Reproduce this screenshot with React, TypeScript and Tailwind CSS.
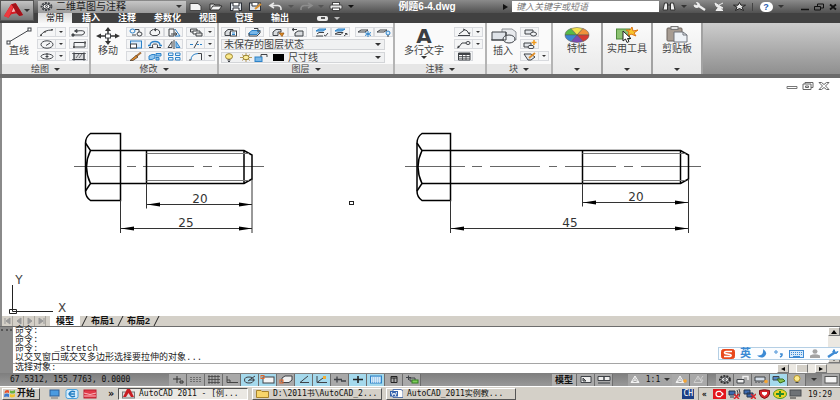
import type { ReactNode } from "react";
import clsx from "clsx";

// ─── Shared bits ──────────────────────────────────────────────────────────────
const INK = "#3f4247";
const BLUE = "#2d82c8";

function Glyph({ w = 16, h = 9, children }: { w?: number; h?: number; children: ReactNode }) {
  return (
    <svg
      width={w}
      height={h}
      viewBox={`0 0 ${w} ${h}`}
      fill="none"
      stroke={INK}
      strokeWidth="1"
      className="block shrink-0"
      aria-hidden="true"
    >
      {children}
    </svg>
  );
}

function Caret({ className = "text-[#333]" }: { className?: string }) {
  return (
    <svg width="6" height="3" viewBox="0 0 6 3" className={clsx("block shrink-0", className)} aria-hidden="true">
      <path d="M0 0H6L3 3Z" fill="currentColor" />
    </svg>
  );
}

// ─── Title bar ────────────────────────────────────────────────────────────────
const quickAccess: { name: string; icon: ReactNode; caret?: boolean }[] = [
  {
    name: "新建",
    icon: <path d="M2 1.500H10L13 4V8.500H2Z" fill="#f4f4f4" stroke="#444" />,
  },
  {
    name: "打开",
    icon: (
      <>
        <path d="M2 8V2H6L7 3H12V4" fill="#ddd" stroke="#333" />
        <path d="M2 8L5 4H14L11 8Z" fill="#f4f4f4" stroke="#333" />
      </>
    ),
  },
  {
    name: "保存",
    icon: (
      <>
        <rect x="2.500" y="1" width="11" height="7.500" fill="#dfe4ea" stroke="#2b2f36" />
        <path d="M5 1V4H11V1M5 8.500V6H11V8.500" fill="#fff" stroke="#2b2f36" />
      </>
    ),
  },
  {
    name: "另存为",
    icon: (
      <>
        <rect x="1.500" y="1" width="11" height="7.500" fill="#dfe4ea" stroke="#2b2f36" />
        <path d="M4 1V4H10V1" fill="#fff" stroke="#2b2f36" />
        <path d="M7 7L13 2" stroke="#d9902f" strokeWidth="2" />
      </>
    ),
  },
  {
    name: "放弃",
    icon: <path d="M6 1L2 3.500L6 6M2 3.500H10Q13.500 4 13 8" stroke="#e8e8e8" strokeWidth="1.500" />,
    caret: true,
  },
  {
    name: "重做",
    icon: <path d="M10 1L14 3.500L10 6M14 3.500H6Q2.500 4 3 8" stroke="#8d8d8d" strokeWidth="1.500" />,
    caret: true,
  },
  {
    name: "打印",
    icon: (
      <>
        <rect x="4.500" y="0.500" width="7" height="3" fill="#fff" stroke="#444" />
        <rect x="2" y="3" width="12" height="4" rx="1" fill="#e6e6e6" stroke="#444" />
        <rect x="4.500" y="6" width="7" height="2.500" fill="#fff" stroke="#444" />
      </>
    ),
    caret: true,
  },
];

function IconButton({ label, className, children }: { label: string; className?: string; children: ReactNode }) {
  return (
    <button aria-label={label} className={clsx("flex items-center justify-center", className)}>
      {children}
    </button>
  );
}

function TitleBar() {
  return (
    <div className="flex h-[13px] items-center bg-linear-to-b from-[#8b8b8b] to-[#515151]">
      <div className="ml-1 flex h-[12px] w-[148px] items-center bg-linear-to-b from-[#c6c6c6] to-[#9c9c9c]">
        <span className="px-[2px]">
          <Glyph w={13} h={9}>
            <ellipse cx="6.500" cy="4.500" rx="5" ry="3.500" strokeWidth="1.800" strokeDasharray="2 1" />
            <ellipse cx="6.500" cy="4.500" rx="3.500" ry="2.500" fill="#eee" />
            <circle cx="6.500" cy="4.500" r="1" />
          </Glyph>
        </span>
        <select
          aria-label="工作空间"
          className="h-[12px] min-w-0 flex-1 appearance-none bg-transparent pl-px text-[10px] leading-[12px] text-[#222] outline-none"
        >
          <option>二维草图与注释</option>
        </select>
        <span className="pr-1">
          <Caret />
        </span>
      </div>
      <div className="flex">
        {quickAccess.map((q) => (
          <div key={q.name} className="flex">
            <IconButton label={q.name} className="w-5">
              <Glyph>{q.icon}</Glyph>
            </IconButton>
            {q.caret && (
              <span className="flex w-[10px] items-center justify-center">
                <Caret className={q.name === "打印" ? "text-[#111]" : "text-[#555]"} />
              </span>
            )}
          </div>
        ))}
      </div>
      <h1 className="flex-1 text-center text-[10px] leading-[12px] font-bold whitespace-nowrap text-white">
        例题6-4.dwg
      </h1>
      <span className="flex w-[14px] justify-center">
        <Glyph w={5} h={6}>
          <path d="M0 0L5 3L0 6Z" fill="#111" stroke="none" />
        </Glyph>
      </span>
      <input
        aria-label="搜索"
        placeholder="键入关键字或短语"
        className="h-[11px] w-[147px] bg-white pl-1 text-[9px] leading-[10px] italic outline-none placeholder:text-[#777]"
      />
      <IconButton label="查找" className="w-5">
        <Glyph w={14} h={9}>
          <path d="M2.500 1H5.500V8H1L2.500 1ZM8.500 1H11.500L13 8H8.500ZM5.500 3H8.500" fill="#eee" stroke="#333" />
        </Glyph>
      </IconButton>
      <span className="flex w-[10px] justify-center">
        <Caret />
      </span>
      <IconButton label="速博应用中心" className="w-5">
        <Glyph w={13} h={9}>
          <path d="M6 4L12 8" stroke="#eee" strokeWidth="2.200" />
          <path d="M1 3Q1 5.500 4 5.500Q7 5 6.500 2.500Q6 0.500 3.500 0.500L5 2.500L3.500 3.500Z" fill="#eee" stroke="#eee" />
        </Glyph>
      </IconButton>
      <IconButton label="通讯中心" className="w-5">
        <Glyph w={13} h={9}>
          <path d="M2 1Q3 7 10 6L2 1ZM6 3L10 1M5 6L3 8.500H10L7 6" fill="#eee" stroke="#eee" />
        </Glyph>
      </IconButton>
      <IconButton label="收藏夹" className="w-5">
        <Glyph w={13} h={9}>
          <path
            d="M6.500 0.500L8 3.200H12.500L9 5.200L10.500 8.500L6.500 6.500L2.500 8.500L4 5.200L0.500 3.200H5Z"
            fill="#e8e8e8"
            stroke="#222"
          />
        </Glyph>
      </IconButton>
      <span className="mx-[3px] h-2 w-px bg-[#444]" />
      <IconButton label="帮助" className="w-5">
        <span className="flex h-[10px] w-[13px] items-center justify-center rounded-full bg-white text-[9px] leading-[10px] font-bold text-[#1f5cb0]">
          ?
        </span>
      </IconButton>
      <span className="mr-3 flex w-[10px] justify-center">
        <Caret />
      </span>
      <IconButton label="最小化" className="w-[14px]">
        <Glyph w={10} h={8}>
          <path d="M1 6.500H9" stroke="#111" strokeWidth="1.500" />
        </Glyph>
      </IconButton>
      <IconButton label="还原" className="w-[14px]">
        <Glyph w={10} h={8}>
          <path d="M3.500 3V1H9.500V5H7M0.500 3.500H6.500V7H0.500Z" stroke="#111" />
        </Glyph>
      </IconButton>
      <IconButton label="关闭" className="w-[14px]">
        <Glyph w={8} h={8}>
          <path d="M1 1.500L7 6.500M7 1.500L1 6.500" stroke="#111" strokeWidth="1.800" />
        </Glyph>
      </IconButton>
    </div>
  );
}

const ribbonTabs = ["插入", "注释", "参数化", "视图", "管理", "输出"];

function Header() {
  return (
    <header className="flex h-[23px] bg-[#414141]">
      <button
        aria-label="应用程序菜单"
        className="flex h-[21px] w-[34px] items-center justify-between border border-[#555] bg-linear-to-b from-[#c4c4c4] to-[#757575] px-[3px]"
      >
        <svg width="19" height="16" viewBox="0 0 21 17" aria-hidden="true">
          <path d="M8 1L13 0L21 13L17 14L14 11L8 12L5 16L0 14Z" fill="#d41c24" />
          <path d="M8 1L13 0L21 13L17 14L14 11Z" fill="#a3121a" />
          <path d="M8 1L10 4L5 16L0 14Z" fill="#ee3a3f" />
          <path d="M10.500 5L12.500 9L8.500 9.500Z" fill="#f6c3c3" />
        </svg>
        <Caret />
      </button>
      <div className="min-w-0 flex-1">
        <TitleBar />
        <nav className="flex h-[10px] items-center text-[9px] leading-[10px] font-bold text-white">
          <button className="ml-1 h-[10px] w-[34px] bg-linear-to-b from-[#d9d9d9] to-[#f7f7f7] font-normal text-[#222]">
            常用
          </button>
          <div className="ml-[10px] flex gap-[18px]">
            {ribbonTabs.map((t) => (
              <button key={t}>{t}</button>
            ))}
          </div>
          <button aria-label="最小化功能区" className="ml-[28px] flex items-center gap-[6px]">
            <span className="flex h-[5px] w-[11px] items-center justify-center rounded-xs bg-[#e9e9e9]">
              <span className="h-[2px] w-1 bg-[#555]" />
            </span>
            <Caret className="text-[#bbb]" />
          </button>
        </nav>
      </div>
    </header>
  );
}

// ─── Ribbon ───────────────────────────────────────────────────────────────────
function Panel({ title, className, children }: { title: string; className: string; children: ReactNode }) {
  return (
    <section aria-label={title} className={clsx("flex shrink-0 flex-col border-r-2 border-[#b4b4b4] bg-[#fafafa]", className)}>
      <div className="flex flex-1 items-start gap-[3px] px-[2px] pt-1">{children}</div>
      <button className="flex h-[10px] items-center justify-center gap-[5px] bg-[#e6e6e6] text-[9px] leading-[10px] text-[#444]">
        {title}
        <Caret />
      </button>
    </section>
  );
}

function BigTool({ label, caret, className, children }: { label: string; caret?: boolean; className: string; children: ReactNode }) {
  return (
    <button className={clsx("flex shrink-0 flex-col items-center text-[10px] leading-[11px] whitespace-nowrap text-[#444]", className)}>
      <span className="flex h-[18px] items-center">{children}</span>
      {label}
      {caret && <Caret />}
    </button>
  );
}

function Tool({ name, caret, children }: { name: string; caret?: boolean; children: ReactNode }) {
  return (
    <div className="flex h-[10px]">
      <button aria-label={name} className="flex w-[19px] items-center justify-center border border-[#d8dade] bg-[#f4f5f6]">
        <Glyph>{children}</Glyph>
      </button>
      {caret && (
        <button aria-label={`${name}选项`} className="flex w-[10px] items-center justify-center border border-l-0 border-[#d8dade] bg-[#f4f5f6]">
          <svg width="4" height="2" viewBox="0 0 4 2" aria-hidden="true">
            <path d="M0 0H4L2 2Z" fill="#333" />
          </svg>
        </button>
      )}
    </div>
  );
}

function DrawPanel() {
  return (
    <Panel title="绘图" className="w-[89px]">
      <BigTool label="直线" className="w-[30px]">
        <Glyph w={26} h={18}>
          <path d="M3 15L23 3" />
          <rect x="1" y="14" width="3" height="3" fill="#fff" />
          <rect x="22" y="1" width="3" height="3" fill="#fff" />
        </Glyph>
      </BigTool>
      <div className="flex flex-col gap-[2px]">
        <Tool name="圆弧" caret>
          <path d="M2 7Q5 2 13 2" />
          <path d="M1 6.500H3V8H1ZM5 3H7V4.500H5ZM12 1H14V2.500H12Z" fill="#555" stroke="none" />
        </Tool>
        <Tool name="圆" caret>
          <ellipse cx="8" cy="4.500" rx="6" ry="3.700" />
          <path d="M7 5.500L11 3" />
        </Tool>
        <Tool name="椭圆" caret>
          <ellipse cx="8" cy="4.500" rx="6" ry="2.500" />
          <path d="M6.500 4.500H9.500M8 1V6" />
        </Tool>
      </div>
      <div className="flex flex-col gap-[2px]">
        <Tool name="多段线">
          <path d="M2 7H11Q14 6 13.500 4Q13 2 6 3" />
          <path d="M6 1.500V4.500L3.500 3ZM1 6H3V8H1Z" fill="#555" />
        </Tool>
        <Tool name="矩形">
          <path d="M3 2.500H14V7H3Z" />
          <path d="M2 6H4V8H2ZM13 1.500H15V3.500H13Z" fill="#555" stroke="none" />
        </Tool>
        <Tool name="图案填充">
          <rect x="3" y="1.500" width="10" height="6" fill="#d9dadc" />
          <path d="M1 1.500H15M1 7.500H15M3 0V9M13 0V9M5 6L8 2M8 6L11 2" strokeWidth="0.700" />
        </Tool>
      </div>
    </Panel>
  );
}

function ModifyPanel() {
  return (
    <Panel title="修改" className="w-[128px]">
      <BigTool label="移动" className="w-[30px]">
        <Glyph w={24} h={18}>
          <path d="M12 3V15M3 9H21" stroke="#333" strokeWidth="1.500" />
          <path d="M12 0L15 4H9ZM12 18L15 14H9ZM0 9L5 6.500V11.500ZM24 9L19 6.500V11.500Z" fill="#333" stroke="none" />
          <rect x="9.500" y="7" width="5" height="4" fill="#fff" />
        </Glyph>
      </BigTool>
      <div className="grid grid-cols-3 gap-y-[2px]">
        <Tool name="复制">
          <ellipse cx="4.500" cy="3" rx="2.500" ry="2" stroke={BLUE} />
          <ellipse cx="11.500" cy="6" rx="2.500" ry="2" />
          <path d="M4 7H8M7 1.500H11V4" />
        </Tool>
        <Tool name="旋转">
          <path d="M6 1.500Q2 3 3 6Q5 8.500 10 7.500Q14 6 12.500 3Q11 1 8 1.500" />
          <path d="M9 0L6 1.500L9 3.500Z" fill={INK} stroke="none" />
        </Tool>
        <Tool name="拉伸">
          <path d="M3 1H8V8H3Z" />
          <path d="M9 1L14 8H9" stroke={BLUE} />
          <path d="M5 6H11M9 4.500L11 6L9 7.500" />
        </Tool>
        <Tool name="缩放">
          <rect x="2.500" y="1" width="11" height="7" fill="#d8ebfa" stroke={BLUE} />
          <rect x="2.500" y="4" width="6" height="4" fill="#fff" />
        </Tool>
        <Tool name="偏移">
          <path d="M2 7.500H6Q4 4 8 4Q12 4 10 7.500H14" />
          <path d="M1 5.500H3Q3 1.500 8 1.500Q13 1.500 13 5.500H15" stroke={BLUE} strokeWidth="1.300" />
        </Tool>
        <Tool name="镜像">
          <path d="M8 0V9" />
          <path d="M6 1.500V7.500H2Z" />
          <path d="M10 1.500V7.500H14Z" fill="#9cc9ef" stroke={BLUE} />
        </Tool>
        <Tool name="删除">
          <path d="M13 0.500L8 4.500" stroke="#a8703a" strokeWidth="2" />
          <path d="M8 3.500L10 5L5 8.500H2Z" fill="#e48b2a" stroke="#463322" strokeWidth="0.700" />
        </Tool>
        <Tool name="分解">
          <path d="M2 4L5 2.500H8V6L5 7.500H2Z" fill="#8fc6f0" stroke={BLUE} />
          <path d="M9 1.500H14V4H9ZM9 5.500H12V8H9Z" fill="#8fc6f0" stroke={BLUE} />
        </Tool>
        <Tool name="阵列">
          <path d="M2.500 1H7V3.500H2.500ZM9.500 1H14V3.500H9.500ZM2.500 5.500H7V8H2.500ZM9.500 5.500H14V8H9.500Z" fill="#e3f1fc" stroke={BLUE} />
        </Tool>
      </div>
      <div className="flex flex-col gap-[2px]">
        <Tool name="复制嵌套对象" caret>
          <path d="M2.500 1H9V4H2.500Z" fill="#ddd" />
          <path d="M5 3H12V6H5Z" fill="#fff" />
          <path d="M8 5H14V8H8Z" fill="#ddd" />
        </Tool>
        <Tool name="修剪" caret>
          <path d="M2 4.500H5" stroke={BLUE} />
          <path d="M6 8L10 1" />
          <path d="M9 4.500H15" stroke={BLUE} strokeDasharray="2 1" />
        </Tool>
        <Tool name="圆角" caret>
          <path d="M3 8Q3 2 10 1.500" stroke={BLUE} />
          <path d="M10 1.500H13.500V8M1 8H3" />
        </Tool>
      </div>
    </Panel>
  );
}

const sheet = <path d="M2 4L5 1.500H10V4H7V7.500H2Z" fill="#d9dcdf" />;

const layerTools: { name: string; icon: ReactNode; gap?: boolean }[] = [
  {
    name: "图层特性",
    icon: (
      <>
        {sheet}
        <rect x="7.500" y="3" width="6" height="5" fill="#fff" />
        <path d="M9 5H12M9 6.500H12" stroke={BLUE} />
      </>
    ),
    gap: true,
  },
  {
    name: "将对象的图层设为当前图层",
    icon: (
      <>
        <path d="M2 5L5 2.500H13L10 6.500H2Z" fill="#7ab8e8" stroke={BLUE} />
        <path d="M2 5V8H10L13 5V2.500M7 0.500H11V4" />
      </>
    ),
    gap: true,
  },
  {
    name: "匹配",
    icon: (
      <>
        {sheet}
        <path d="M8 5H13L11 8.500Z" fill="#e08a22" stroke="#8d4e0c" strokeWidth="0.700" />
      </>
    ),
  },
  {
    name: "上一个",
    icon: (
      <>
        <path d="M5 5L8 3H13V8H5Z" fill="#d9dcdf" />
        <path d="M7 1.500H2M4 0L2 1.500L4 3" />
      </>
    ),
    gap: true,
  },
  {
    name: "隔离",
    icon: (
      <>
        <path d="M2 3L5 1H12L9 3Z" fill="#7ab8e8" stroke={BLUE} />
        <path d="M3 6L5 4.500H10M2 8H9M10 7L11.500 8L14 5" />
      </>
    ),
  },
  {
    name: "取消隔离",
    icon: (
      <>
        <path d="M2 3L5 1H12L9 3Z" fill="#7ab8e8" stroke={BLUE} />
        <path d="M2 6L5 4.500H10L8 6.500ZM11 8L14 5.500M12 5.500H14V7" />
      </>
    ),
    gap: true,
  },
  {
    name: "冻结",
    icon: (
      <>
        <path d="M1 4L4 2H11L8 4Z" fill="#eee" />
        <path d="M11 3V9M8 4.500L14 7.500M14 4.500L8 7.500" stroke={BLUE} />
      </>
    ),
  },
  {
    name: "关闭图层",
    icon: (
      <>
        <path d="M1 4L4 2H11L8 4Z" fill="#eee" />
        <ellipse cx="12" cy="5" rx="2" ry="2" fill="#d6e9f8" stroke={BLUE} />
        <path d="M12 7V9" />
      </>
    ),
  },
];

const layerSelect =
  "h-[11px] min-w-0 flex-1 appearance-none bg-transparent pl-[3px] text-[10px] leading-[11px] text-[#444] outline-none";

function LayerPanel() {
  return (
    <Panel title="图层" className="w-[176px]">
      <div className="flex w-full flex-col gap-[2px]">
        <div className="flex">
          {layerTools.map((t) => (
            <div key={t.name} className={t.gap ? "mr-[5px]" : ""}>
              <Tool name={t.name}>{t.icon}</Tool>
            </div>
          ))}
        </div>
        <div className="flex h-[11px] w-[164px] items-center bg-[#f0f1f2] pr-1 ring-1 ring-[#d3d5d8] ring-inset">
          <select aria-label="图层状态" className={layerSelect}>
            <option>未保存的图层状态</option>
          </select>
          <Caret />
        </div>
        <div className="flex h-[11px] w-[164px] items-center bg-[#f0f1f2] pr-1 ring-1 ring-[#d3d5d8] ring-inset">
          <Glyph w={64} h={9}>
            <ellipse cx="8" cy="3.500" rx="3.500" ry="2.800" fill="#fbe98b" stroke="#9a8433" />
            <path d="M6.500 7H9.500M7 8.500H9" />
            <path d="M25 0V9M19 4.500H31M21 1.500L29 7.500M29 1.500L21 7.500" stroke="#a8873a" strokeWidth="0.800" />
            <ellipse cx="25" cy="4.500" rx="3" ry="2.200" fill="#fdf0a0" stroke="#9a8433" />
            <rect x="34" y="4" width="7" height="4.500" fill="#7ab8e8" stroke={BLUE} />
            <path d="M40 4V1.500H46V4" />
            <rect x="52" y="1" width="11" height="7" fill="#000" stroke="none" />
          </Glyph>
          <select aria-label="图层" className={layerSelect}>
            <option>尺寸线</option>
          </select>
          <Caret />
        </div>
      </div>
    </Panel>
  );
}

function AnnotatePanel() {
  return (
    <Panel title="注释" className="w-[92px]">
      <BigTool label="多行文字" caret className="w-[54px]">
        <span className="font-['DejaVu_Sans'] text-[20px] leading-[16px] font-bold text-[#3a3d42]">A</span>
      </BigTool>
      <div className="flex flex-col gap-[2px]">
        <Tool name="线性标注" caret>
          <path d="M2 7.500H14M3 6L9 1.500M7 1Q12 2 13 6" />
          <path d="M12 4.500H14.500L13.500 7Z" fill={INK} stroke="none" />
        </Tool>
        <Tool name="引线" caret>
          <path d="M2 8L6 3H10" />
          <ellipse cx="12" cy="3" rx="2" ry="1.500" />
          <path d="M1 8.500L2 5.500L4 7Z" fill={INK} stroke="none" />
        </Tool>
        <Tool name="表格">
          <path d="M2.500 1H14V8H2.500Z" fill="#fff" />
          <path d="M2 2H14" strokeWidth="2" />
          <path d="M2.500 4.500H14M2.500 6.200H14M6.500 2V8M10 2V8" strokeWidth="0.800" />
        </Tool>
      </div>
    </Panel>
  );
}

function BlockPanel() {
  return (
    <Panel title="块" className="w-[66px]">
      <BigTool label="插入" className="w-[28px]">
        <Glyph w={27} h={18}>
          <path d="M12 2H22L26 5V13H12Z" fill="#e8eaed" stroke="#8c9096" />
          <path d="M2 5H16V13H2Z" fill="#dfe3e8" />
          <ellipse cx="19" cy="12" rx="6" ry="4" fill="#eef1f4" />
          <path d="M1 13H16V5" />
        </Glyph>
      </BigTool>
      <div className="flex flex-col gap-[2px]">
        <Tool name="创建块">
          <path d="M3 2H11V6H3Z" fill="#e3e6ea" />
          <ellipse cx="11.500" cy="6" rx="3" ry="2" fill="#f2f4f6" />
        </Tool>
        <Tool name="块编辑器">
          <path d="M2 3H9V7H2Z" fill="#e3e6ea" />
          <ellipse cx="9" cy="7" rx="3" ry="1.700" fill="#f2f4f6" />
          <path d="M12 0V5M9.500 2.500H14.500" stroke="#ef9a1c" strokeWidth="1.500" />
        </Tool>
        <Tool name="定义属性" caret>
          <path d="M2 2H9L13 5L9 8H6Z" fill="#e3e6ea" />
          <path d="M7 6L13 1" stroke="#e0902c" strokeWidth="1.800" />
        </Tool>
      </div>
    </Panel>
  );
}

function CollapsedPanel({ title, children }: { title: string; children: ReactNode }) {
  return (
    <button className="flex w-[50px] shrink-0 flex-col items-center border-r-2 border-[#a2a2a2] bg-linear-to-b from-[#fbfbfb] to-[#e9e9e9] pt-[3px] text-[10px] leading-[11px] text-[#444]">
      <span className="flex h-[17px] items-center">{children}</span>
      {title}
      <span className="mt-auto pb-[3px]">
        <Caret />
      </span>
    </button>
  );
}

function Ribbon() {
  return (
    <div className="flex h-[51px] border-l-2 border-[#8a8a8a] bg-linear-to-b from-[#cdcdcd] to-[#8f8f8f]">
      <DrawPanel />
      <ModifyPanel />
      <LayerPanel />
      <AnnotatePanel />
      <BlockPanel />
      <CollapsedPanel title="特性">
        <svg width="26" height="16" viewBox="-13 -8 26 16" aria-hidden="true">
          <g stroke="#555" strokeWidth="0.500">
            <path d="M0 0L-12 0A12 7.500 0 0 1 -6 -6.500Z" fill="#55b948" />
            <path d="M0 0L-6 -6.500A12 7.500 0 0 1 6 -6.500Z" fill="#f3e14c" />
            <path d="M0 0L6 -6.500A12 7.500 0 0 1 12 0Z" fill="#f0913a" />
            <path d="M0 0L12 0A12 7.500 0 0 1 6 6.500Z" fill="#d63a32" />
            <path d="M0 0L6 6.500A12 7.500 0 0 1 -6 6.500Z" fill="#7a4cb4" />
            <path d="M0 0L-6 6.500A12 7.500 0 0 1 -12 0Z" fill="#3c86d2" />
          </g>
        </svg>
      </CollapsedPanel>
      <CollapsedPanel title="实用工具">
        <Glyph w={24} h={17}>
          <rect x="1.500" y="3" width="13" height="10" fill="#8cc371" stroke="#4f8a3c" />
          <path d="M17 1L18 5L23 4L19 7L21 10L16 8L13 10L14 6L11 4L15 4Z" fill="#f7c52c" stroke="#dc7415" />
          <path d="M8 5L8 15L10.500 13L12 16.500L14 15.500L12.500 12.500H16Z" fill="#fff" stroke="#222" />
        </Glyph>
      </CollapsedPanel>
      <CollapsedPanel title="剪贴板">
        <Glyph w={22} h={17}>
          <rect x="1" y="2" width="15" height="13" rx="1" fill="#a79c92" stroke="#6d655e" />
          <rect x="5" y="0.500" width="7" height="3" fill="#e2e2e2" stroke="#777" />
          <path d="M8 6H17L21 9V16H8Z" fill="#eef2f7" stroke="#70757d" />
          <path d="M17 6V9H21" stroke="#70757d" />
        </Glyph>
      </CollapsedPanel>
    </div>
  );
}

// ─── Drawing area ─────────────────────────────────────────────────────────────
// Dimension line with solid arrowheads pointing outwards.
function Dimension({ x1, x2, y, tx, label }: { x1: number; x2: number; y: number; tx: number; label: string }) {
  return (
    <g>
      <path d={`M${x1} ${y}H${x2}`} stroke="#333" strokeWidth="1" />
      <path d={`M${x1} ${y}l13 -2v4ZM${x2} ${y}l-13 -2v4Z`} fill="#000" />
      <text x={tx} y={y - 2} textAnchor="middle" fontSize="12" fill="#333" fontFamily="DejaVu Sans, sans-serif">
        {label}
      </text>
    </g>
  );
}

function Bolt({ head, collar, thread, tip, axis, dimY }: { head: number; collar: number; thread: number; tip: number; axis: string; dimY: number }) {
  const edge = head + 5;
  return (
    <g fill="none">
      <path d={axis} stroke="#666" />
      <g stroke="#000" strokeWidth="1.500">
        <path d={`M${collar} 55.500H${edge}Q${head} 59 ${head} 65V113Q${head} 119 ${edge} 122.500H${collar}Z`} />
        <path d={`M${head} 65L${edge} 72.500Q${head - 3} 89 ${edge} 105.500L${head} 113`} />
        <path d={`M${edge} 72.500H${tip - 8}L${tip} 77V101L${tip - 8} 105.500H${edge}`} />
        <path d={`M${thread} 72.500V105.500M${tip - 8} 72.500V105.500`} />
      </g>
      <path d={`M${thread} 75.500H${tip - 3}M${thread} 102.500H${tip - 3}`} stroke="#777" />
      <path d={`M${collar} 122V155M${thread} 105V${dimY + 4}M${tip} 101V155`} stroke="#333" />
    </g>
  );
}

function ModelSpace() {
  return (
    <main className="relative border-l-2 border-[#8a8a8a] bg-white">
      <svg viewBox="2 0 838 238" className="block w-full" role="img" aria-label="螺栓图形">
        <Bolt
          head={85.5}
          collar={120.5}
          thread={146.5}
          tip={252}
          dimY={126.5}
          axis="M74 88.500H121M127 88.500H136M143 88.500H194M203 88.500H212M219 88.500H264"
        />
        <Dimension x1={147} x2={252} y={126.5} tx={200} label="20" />
        <Dimension x1={121} x2={252} y={150.5} tx={186} label="25" />

        <Bolt
          head={417}
          collar={450.5}
          thread={582.5}
          tip={688.5}
          dimY={124.5}
          axis="M405 88.500H465M472 88.500H482M490 88.500H540M549 88.500H557M565 88.500H616M624 88.500H633M641 88.500H701"
        />
        <Dimension x1={583} x2={688} y={124.5} tx={636} label="20" />
        <Dimension x1={451} x2={688} y={150.5} tx={570} label="45" />

        <rect x="349.500" y="123.500" width="4" height="3" fill="none" stroke="#222" />

        {/* UCS icon */}
        <path d="M12.500 207V233.500H53M9.500 231.500H16.500V235.500H9.500Z" fill="none" stroke="#222" />
        <g fontSize="12" fill="#444" fontFamily="DejaVu Sans, sans-serif" textAnchor="middle">
          <text x="19" y="206">Y</text>
          <text x="62" y="234">X</text>
        </g>
      </svg>
      <div className="absolute top-1 right-[10px] flex gap-1">
        <IconButton label="最小化图形">
          <Glyph w={12} h={8}>
            <path d="M1 4.500H11V6.500H1Z" stroke="#777" />
          </Glyph>
        </IconButton>
        <IconButton label="还原图形">
          <Glyph w={12} h={8}>
            <path d="M3 2V0.500H11V5.500H9M1 2H9V7.500H1ZM3.500 4H6.500V5.500H3.500Z" stroke="#666" />
          </Glyph>
        </IconButton>
        <IconButton label="关闭图形">
          <Glyph w={12} h={8}>
            <path d="M1 0.500H3.500L6 2.500L8.500 0.500H11L7.500 4L11 7.500H8.500L6 5.500L3.500 7.500H1L4.500 4Z" stroke="#666" />
          </Glyph>
        </IconButton>
      </div>
    </main>
  );
}

function Slash() {
  return (
    <Glyph w={9} h={10}>
      <path d="M2 10L7 0" stroke="#222" />
    </Glyph>
  );
}

function LayoutTabs() {
  return (
    <nav className="flex h-[10px] items-center border-l-2 border-[#8a8a8a] bg-[#d4d0c8] text-[9px] leading-[10px] text-[#111]">
      {["M3 1V7M8 1L4 4L8 7Z", "M8 1L4 4L8 7Z", "M4 1L8 4L4 7Z", "M9 1V7M4 1L8 4L4 7Z"].map((d) => (
        <IconButton key={d} label="滚动布局" className="h-[10px] w-[11px] border-r border-[#aaa69e]">
          <Glyph w={11} h={8}>
            <path d={d} fill="#999" stroke="#999" />
          </Glyph>
        </IconButton>
      ))}
      <button className="ml-1 h-[10px] bg-white px-[6px] font-bold">模型</button>
      <Slash />
      <button className="px-[2px] font-bold">布局1</button>
      <Slash />
      <button className="px-[2px] font-bold">布局2</button>
      <Slash />
    </nav>
  );
}

// ─── Command window ───────────────────────────────────────────────────────────
const history = ["命令:", "命令:", "命令:   _stretch", "以交叉窗口或交叉多边形选择要拉伸的对象..."];

function ScrollArrow({ d, label }: { d: string; label: string }) {
  return (
    <IconButton label={label} className="h-[9px] w-3 border border-[#fff] border-r-[#777] border-b-[#777] bg-[#d4d0c8]">
      <Glyph w={6} h={4}>
        <path d={d} fill="#000" stroke="none" />
      </Glyph>
    </IconButton>
  );
}

function CommandWindow() {
  return (
    <section aria-label="命令行" className="relative flex border-t border-[#6c6c6c] bg-white">
      <div className="w-[13px] bg-[#8a8a8a] pt-[2px]">
        <div className="mx-px border-t-2 border-dotted border-[#555]" />
      </div>
      <div className="min-w-0 flex-1 font-['Liberation_Mono','Noto_Sans_CJK_SC',monospace] text-[9px] text-[#222]">
        <div className="flex justify-between">
          <div className="pl-[2px]">
            {history.map((line, i) => (
              <div key={i} className="h-[9px] leading-[9px] whitespace-pre">
                {line}
              </div>
            ))}
          </div>
          <div className="flex flex-col justify-between bg-[#ebe8e2]">
            <ScrollArrow label="向上滚动" d="M0 4L3 0L6 4Z" />
            <ScrollArrow label="向下滚动" d="M0 0L3 4L6 0Z" />
          </div>
        </div>
        <div className="flex h-[10px] items-center border-t border-[#a5a5a5]">
          <label htmlFor="cmd" className="pl-[2px] leading-[9px]">
            选择对象:
          </label>
          <input id="cmd" className="h-[9px] min-w-0 flex-1 outline-none" />
          <div className="flex w-[50px] justify-between bg-[#ebe8e2]">
            <ScrollArrow label="向左滚动" d="M5 0L1 2L5 4Z" />
            <span className="w-3 border border-white border-r-[#777] bg-[#d4d0c8]" />
            <ScrollArrow label="向右滚动" d="M1 0L5 2L1 4Z" />
          </div>
          <span className="h-[9px] w-[13px] bg-[#d4d0c8]" />
        </div>
      </div>
      <InputMethodBar />
    </section>
  );
}

function InputMethodBar() {
  return (
    <div className="absolute top-5 right-0 flex h-[13px] w-[122px] items-center gap-[5px] border border-r-0 border-[#b5cfe4] bg-[#fbfdff] pl-[2px] text-[#3c8ad4]">
      <Glyph w={14} h={10}>
        <rect x="0.500" y="0.500" width="13" height="9" rx="2" fill="#e8481c" stroke="#e8481c" />
        <path d="M11 2.500H5Q2.500 3 4 4.500L9 5.500Q11.500 6.500 9 7.500H3" stroke="#fff" strokeWidth="1.500" />
      </Glyph>
      <span className="text-[11px] leading-[11px] font-bold">英</span>
      <Glyph w={12} h={9}>
        <path d="M7 0Q13 4 8 8Q4 9.500 1 6.500Q8 7 7 0Z" fill="currentColor" stroke="none" />
      </Glyph>
      <Glyph w={11} h={9}>
        <circle cx="3" cy="3" r="1.200" stroke="currentColor" />
        <path d="M7 5H9Q9.500 7 7 8" stroke="currentColor" strokeWidth="1.500" />
      </Glyph>
      <Glyph w={15} h={8}>
        <rect x="0.500" y="0.500" width="14" height="7" fill="#d6e9fa" stroke="currentColor" />
        <path d="M2 2.500H13M2 4.500H13" stroke="currentColor" strokeDasharray="1 1" />
        <path d="M4 6.500H11" stroke="currentColor" />
      </Glyph>
      <Glyph w={12} h={9}>
        <ellipse cx="6" cy="2.500" rx="2.500" ry="2.300" fill="#a4a4a4" stroke="none" />
        <path d="M1 9V6.500Q6 4 11 6.500V9Z" fill="#a4a4a4" stroke="none" />
      </Glyph>
      <Glyph w={13} h={9}>
        <path d="M2 8L8 4" stroke="currentColor" strokeWidth="2.500" />
        <path d="M8 0.500Q5.500 3 8 4.500Q11 5.500 12 2.500L9.500 3.500Z" fill="currentColor" stroke="currentColor" />
      </Glyph>
    </div>
  );
}

// ─── Status bar ───────────────────────────────────────────────────────────────
const drafting: { name: string; on?: boolean; icon: ReactNode }[] = [
  { name: "推断约束", icon: <path d="M3 4H11M7 1V8M10 6H13V8H10Z" stroke="#333" /> },
  { name: "捕捉模式", icon: <path d="M3 2V8M6 2V8M9 2V8M12 2V8" strokeDasharray="1 1" stroke="#333" /> },
  { name: "栅格显示", icon: <path d="M2 1.500H14M2 4.500H14M2 7.500H14M3 0V9M6 0V9M9 0V9M12 0V9" stroke="#444" strokeWidth="0.800" /> },
  { name: "正交模式", icon: <path d="M3 1V7.500H14M3 5H6V7.500" stroke="#444" /> },
  {
    name: "极轴追踪",
    on: true,
    icon: (
      <>
        <ellipse cx="7" cy="5" rx="4.500" ry="3" />
        <path d="M6 6L13 1M7 5H13" />
      </>
    ),
  },
  {
    name: "对象捕捉",
    on: true,
    icon: (
      <>
        <rect x="3" y="2" width="11" height="6" fill="#f4f4f4" />
        <rect x="1" y="0.500" width="3" height="3" stroke="#e2662a" />
      </>
    ),
  },
  {
    name: "三维对象捕捉",
    icon: (
      <>
        <path d="M4 3L7 1H14V5L11 7.500H4Z" fill="#f0f0f0" />
        <rect x="2" y="5" width="3" height="3" stroke="#e2662a" />
      </>
    ),
  },
  { name: "对象捕捉追踪", on: true, icon: <path d="M12 1L4 7.500H13" /> },
  {
    name: "动态UCS",
    on: true,
    icon: (
      <>
        <path d="M3 1V7.500H13M3 7.500L9 3" />
        <path d="M9 1H12V4H9Z" fill="#f2ac31" stroke="none" />
      </>
    ),
  },
  { name: "动态输入", icon: <path d="M2 4.500H10M5 1.500V7.500M9 6H14" strokeWidth="1.300" /> },
  { name: "线宽", on: true, icon: <path d="M3 4.500H13M8 1V8" stroke="#222" strokeWidth="1.600" /> },
  {
    name: "透明度",
    on: true,
    icon: (
      <>
        <rect x="2.500" y="1" width="11" height="7" fill="#a8d0ef" stroke={BLUE} />
        <path d="M3 3H13M3 5H13M3 7H13" strokeDasharray="1 1" stroke="#fff" />
      </>
    ),
  },
  { name: "快捷特性", icon: <path d="M5 1.500H11V7.500H5ZM5 3H11M8 3V7" stroke="#222" /> },
  {
    name: "选择循环",
    icon: (
      <>
        <path d="M2 2.500H7M4.500 0.500V5M6 3H11V6H6Z" />
        <rect x="8" y="5" width="6" height="3" fill="#7fd05a" stroke="#337f20" />
      </>
    ),
  },
];

const annoIcon = <path d="M7 1L3 7.500H11ZM7 1V5M7 5L3 7.500M7 5L11 7.500" stroke="#f2f2f2" />;
const bulb = <circle cx="12" cy="6" r="1.800" fill="#f7a531" stroke="none" />;

function StatusButton({ label, on, children }: { label: string; on?: boolean; children: ReactNode }) {
  return (
    <IconButton
      label={label}
      className={clsx("h-[12px] w-[18px] border-r border-[#6e6e6e]", on ? "bg-[#a5d9ec]" : "bg-[#a9a9a9]")}
    >
      <Glyph>{children}</Glyph>
    </IconButton>
  );
}

function StatusBar() {
  return (
    <div className="flex h-[13px] items-center bg-linear-to-b from-[#7e7e7e] to-[#999] font-['DejaVu_Sans_Mono','Noto_Sans_CJK_SC',monospace] text-[8px] leading-[12px] text-[#111]">
      <span className="w-[169px] pl-[10px] whitespace-nowrap">67.5312, 155.7763, 0.0000</span>
      {drafting.map((d) => (
        <StatusButton key={d.name} label={d.name} on={d.on}>
          {d.icon}
        </StatusButton>
      ))}
      <span className="flex-1" />
      <button className="h-[12px] w-[25px] border-r border-[#6e6e6e] bg-[#b1b1b1] text-[9px] font-bold">模型</button>
      <StatusButton label="快速查看布局">
        <path d="M3 1.500H13V7.500H3ZM5 3V6H8Z" fill="#eee" />
      </StatusButton>
      <StatusButton label="快速查看图形">
        <path d="M2 1.500H8V5.500H2ZM8 1.500H14V5.500H8ZM2 8H14" fill="#eee" />
      </StatusButton>
      <button className="ml-[15px] flex h-[12px] w-[44px] items-center justify-between bg-[#a5a5a5] pr-[2px]">
        <Glyph w={14}>{annoIcon}</Glyph>
        1:1
        <Caret />
      </button>
      <StatusButton label="注释可见性">
        {annoIcon}
        {bulb}
      </StatusButton>
      <StatusButton label="自动添加比例">
        <path d="M7 1L3 7.500H11ZM7 1V5M12 1L9 5H12L10 8" stroke="#d0d0d0" />
      </StatusButton>
      <span className="w-2" />
      <StatusButton label="切换工作空间">
        <ellipse cx="8" cy="4.500" rx="5" ry="3.500" stroke="#333" strokeWidth="2" strokeDasharray="2 1" />
        <ellipse cx="8" cy="4.500" rx="3.500" ry="2.500" fill="#eee" />
        <circle cx="8" cy="4.500" r="1" />
      </StatusButton>
      <StatusButton label="锁定">
        <path d="M2 4.500H9V8H2Z" fill="#eee" />
        <path d="M8 4V1.500H13V5" stroke="#eee" strokeWidth="1.500" />
      </StatusButton>
      <StatusButton label="硬件加速">
        <path d="M2 2H12V6H2ZM3 7V8M6 7V8M9 7V8" fill="#d3dde8" />
        <circle cx="13" cy="6.500" r="1.800" fill="#f7a531" stroke="none" />
      </StatusButton>
      <StatusButton label="性能" on>
        <path d="M2 1.500H8V5H2Z" fill="#5389c8" />
        <path d="M6 4L12 4L14 6L9 8Z" fill="#8cc34e" stroke="#35701c" />
      </StatusButton>
      <StatusButton label="隔离对象">
        <ellipse cx="8" cy="3.500" rx="3" ry="3" fill="#fdeb8e" stroke="#b59429" />
        <path d="M6.500 7.500H9.500" />
      </StatusButton>
      <span className="flex w-4 justify-center">
        <Caret />
      </span>
      <StatusButton label="全屏显示">
        <rect x="2" y="1.500" width="12" height="6.500" fill="#f4f4f4" stroke="#555" />
      </StatusButton>
    </div>
  );
}

// ─── Taskbar ──────────────────────────────────────────────────────────────────
const tasks: { label: string; active?: boolean; icon: ReactNode }[] = [
  {
    label: "AutoCAD 2011 - [例...",
    active: true,
    icon: (
      <>
        <rect x="1.500" y="3" width="12" height="6" fill="#ddd" stroke="#777" />
        <path d="M6 0H9L13 8H10L7.500 4L5 8H2Z" fill="#c91d22" stroke="none" />
      </>
    ),
  },
  {
    label: "D:\\2011书\\AutoCAD_2...",
    icon: <path d="M1.500 8.500V1.500H6L7 2.500H13.500V8.500Z" fill="#f7d56a" stroke="#a8832a" />,
  },
  {
    label: "AutoCAD_2011实例教...",
    icon: (
      <>
        <path d="M4 0.500H12L14 2V8.500H4Z" fill="#fff" stroke="#5874a8" />
        <rect x="1" y="2" width="8" height="5.500" fill="#3563ad" stroke="none" />
        <path d="M2.500 3L3.500 6.500L5 4L6.500 6.500L7.500 3" stroke="#fff" />
      </>
    ),
  },
];

function Tray() {
  return (
    <div className="flex h-[13px] items-center gap-[2px] border-t border-l border-[#8c8982] pr-[8px] pl-[3px]">
      <span className="mr-1 font-bold">«</span>
      <Glyph w={13} h={10}>
        <rect width="13" height="10" fill="#e3161c" stroke="none" />
        <path d="M8 2.500Q3 1.500 3 5Q3 8.500 8 7.500M8 3L10 5L8 7" stroke="#fff" strokeWidth="1.300" />
      </Glyph>
      <Glyph w={13} h={10}>
        <path d="M1 2H7V6H1ZM2 8H6" fill="#3d6bb0" stroke="#25364f" />
        <path d="M9 1Q11 4 9 7M11 0Q13 4 11 8" />
        <path d="M6 5L11 10M11 5L6 10" stroke="#d8262c" strokeWidth="1.500" />
      </Glyph>
      <Glyph w={13} h={10}>
        <path d="M1 1H7V5H1ZM4 4H10V8H4Z" fill="#3d6bb0" stroke="#25364f" />
        <path d="M8 5L13 10M13 5L8 10" stroke="#d8262c" strokeWidth="1.500" />
      </Glyph>
      <Glyph w={13} h={10}>
        <path d="M1.500 1.500Q6.500 0 11.500 1.500V5Q10.500 8.500 6.500 9.500Q2.500 8.500 1.500 5Z" fill="#d8242b" stroke="#7d1115" />
        <path d="M4 3H9V5L6.500 7L4 5Z" fill="#fff" stroke="none" />
      </Glyph>
      <Glyph w={14} h={10}>
        <ellipse cx="7" cy="5" rx="6.500" ry="4.500" fill="#f2d324" stroke="#4b9a2a" />
        <path d="M7 2V8M3 5H11" stroke="#28892b" strokeWidth="2" />
      </Glyph>
      <Glyph w={13} h={10}>
        <rect x="1" y="1" width="11" height="6" fill="#6e7276" stroke="#4b4e52" />
        <path d="M1 9H7" stroke="#333" />
      </Glyph>
      <time className="ml-1">19:29</time>
    </div>
  );
}

function Taskbar() {
  return (
    <footer className="flex h-[14px] items-center border-t border-white bg-[#d4d0c8] pl-[2px] font-['DejaVu_Sans_Mono','Noto_Sans_CJK_SC',monospace] text-[8px] leading-[11px] text-[#111]">
      <button className="flex h-[12px] w-[38px] items-center gap-px border border-white border-r-[#555] border-b-[#555] text-[9px] font-bold">
        <Glyph w={13} h={9}>
          <path d="M2 2Q4 0.500 6 1.500V4Q4 3 1.500 4.500Z" fill="#e8502a" stroke="none" />
          <path d="M7 1.500Q9 2.500 12 1V4Q9 5 7 4Z" fill="#6cb33e" stroke="none" />
          <path d="M1.500 5Q4 4 6 5V8Q4 7 1 8Z" fill="#3c78d0" stroke="none" />
          <path d="M7 5Q9 6 12 5V7.500Q9 9 7 8Z" fill="#f3c52e" stroke="none" />
        </Glyph>
        开始
      </button>
      <div className="flex w-[78px] items-center gap-1 pl-2">
        <Glyph w={13} h={10}>
          <rect x="2" y="1" width="9" height="6" fill="#4b9be0" stroke="#2d5f98" />
          <path d="M3 9H10" stroke="#777" />
        </Glyph>
        <Glyph w={14} h={10}>
          <rect x="1" y="0.500" width="12" height="9" rx="2" fill="#d7ecfb" stroke="#4aa0db" />
          <path d="M10 3Q6 1 4 5Q6 9 10 7M4 5H10" stroke="#1f7dc4" strokeWidth="1.500" />
        </Glyph>
        <Glyph w={14} h={10}>
          <rect x="1" y="1" width="12" height="8" fill="#e23a48" stroke="#b81e2f" />
          <path d="M1 4Q7 7 13 4M1 7H13" stroke="#f8b8bd" />
        </Glyph>
        <span className="ml-auto pr-1 text-[10px] font-bold">»</span>
      </div>
      <div className="flex gap-1">
        {tasks.map((t) => (
          <button
            key={t.label}
            className={clsx(
              "flex h-[12px] w-[130px] items-center gap-1 border pl-[2px] whitespace-nowrap",
              t.active ? "border-[#555] border-r-white border-b-white bg-[#eae8e3]" : "border-white border-r-[#555] border-b-[#555]"
            )}
          >
            <Glyph w={14} h={10}>{t.icon}</Glyph>
            {t.label}
          </button>
        ))}
      </div>
      <span className="flex-1" />
      <span className="mr-1 bg-[#1c3f86] px-px leading-[10px] text-white">CH</span>
      <Tray />
    </footer>
  );
}

export default function App() {
  return (
    <div className="w-full overflow-hidden bg-[#d4d0c8] font-['Liberation_Sans','Noto_Sans_CJK_SC',sans-serif]">
      <Header />
      <Ribbon />
      <div className="h-1 bg-[#6b6b6b]" />
      <ModelSpace />
      <LayoutTabs />
      <CommandWindow />
      <StatusBar />
      <Taskbar />
    </div>
  );
}
